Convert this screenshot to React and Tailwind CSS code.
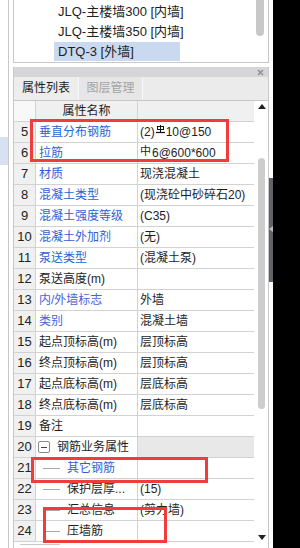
import React from "react";

const FONT = "font-['Liberation_Sans','Noto_Sans_CJK_SC',sans-serif]";
const BLUE = "text-[#2f5fd6]";

const rows = [
  { n: 5, name: "垂直分布钢筋", blue: true, value: "rebar5" },
  { n: 6, name: "拉筋", blue: true, value: "rebar6" },
  { n: 7, name: "材质", blue: true, value: "现浇混凝土" },
  { n: 8, name: "混凝土类型", blue: true, value: "(现浇砼中砂碎石20)" },
  { n: 9, name: "混凝土强度等级", blue: true, value: "(C35)" },
  { n: 10, name: "混凝土外加剂", blue: true, value: "(无)" },
  { n: 11, name: "泵送类型", blue: true, value: "(混凝土泵)" },
  { n: 12, name: "泵送高度(m)", value: "" },
  { n: 13, name: "内/外墙标志", blue: true, purple: true, value: "外墙" },
  { n: 14, name: "类别", blue: true, purple: true, value: "混凝土墙" },
  { n: 15, name: "起点顶标高(m)", value: "层顶标高" },
  { n: 16, name: "终点顶标高(m)", value: "层顶标高" },
  { n: 17, name: "起点底标高(m)", value: "层底标高" },
  { n: 18, name: "终点底标高(m)", value: "层底标高" },
  { n: 19, name: "备注", value: "" },
  { n: 20, name: "钢筋业务属性", group: true, value: "" },
  { n: 21, name: "其它钢筋", tree: true, blue: true, value: "" },
  { n: 22, name: "保护层厚...", tree: true, value: "(15)" },
  { n: 23, name: "汇总信息", tree: true, value: "(剪力墙)" },
  { n: 24, name: "压墙筋", tree: true, value: "" },
];

// 三级钢符号
const Grade3 = () => (
  <svg width="9" height="9" viewBox="0 0 9 9" className="relative -top-[3px] mx-[1px]">
    <rect x="1.5" y="1.5" width="6" height="3" fill="none" stroke="#111" strokeWidth="1" />
    <line x1="4.5" y1="0" x2="4.5" y2="7.5" stroke="#111" strokeWidth="1" />
    <line x1="0" y1="7.5" x2="9" y2="7.5" stroke="#111" strokeWidth="1.2" />
  </svg>
);

const Value = ({ v }) => {
  if (v === "rebar5")
    return (
      <span className="flex items-center">
        (2)
        <Grade3 />
        10@150
      </span>
    );
  if (v === "rebar6")
    return (
      <span className="flex items-center">
        <span className="relative -top-[2px] text-[11px] mr-[1px]">中</span>
        6@600*600
      </span>
    );
  return v;
};

const Row = ({ r }) => {
  const color = r.blue ? (r.purple ? "text-[#4a63e0]" : BLUE) : "text-[#1e1e1e]";
  return (
    <div className="flex h-[21px] border-b border-[#d2d2d2]">
      <div className="w-[22px] shrink-0 bg-[#f0f0f0] border-r border-[#d2d2d2] text-center text-[13px] leading-[20px] text-[#222]">
        {r.n}
      </div>
      <div className="w-[102px] shrink-0 border-r border-[#d2d2d2] flex items-center whitespace-nowrap overflow-hidden">
        {r.group && (
          <span className="ml-[2px] mr-[7px] w-[12px] h-[12px] border border-[#8a8a8a] rounded-[2px] flex items-center justify-center">
            <span className="w-[6px] h-[1px] bg-[#444]" />
          </span>
        )}
        {r.tree && (
          <>
            <span className="ml-[7px] w-[17px] h-[1px] bg-[#a8a8a8]" />
            <span className="w-[7px]" />
          </>
        )}
        <span className={`${color} ${r.group || r.tree ? "" : "pl-[3px]"} leading-[20px]`}>{r.name}</span>
      </div>
      <div
        className={`flex-1 pl-[2px] leading-[20px] whitespace-nowrap overflow-hidden text-[#1e1e1e] ${
          r.group ? "bg-[#e8e8e8]" : ""
        }`}
      >
        <Value v={r.value} />
      </div>
    </div>
  );
};

export default function App() {
  return (
    <div className={`relative w-[300px] h-[548px] flex bg-white overflow-hidden text-[12px] ${FONT}`}>
      {/* left gutter */}
      <div className="w-[8px] flex flex-col">
        <div className="h-[137px]" />
        <div className="h-[28px] bg-[#d6e2f1]" />
      </div>
      <div className="w-[5px] border-l border-[#c8c8c8]" />

      {/* main content */}
      <div className="w-[256px] flex flex-col">
        {/* component list */}
        <div className="h-[63px] border-l border-r border-b border-[#c8c8c8] flex">
          <div className="flex-1 pt-[2px] text-[13px] text-[#1e1e1e]">
            <div className="h-[20px] leading-[20px] ml-[40px] pl-[4px]">JLQ-主楼墙300 [内墙]</div>
            <div className="h-[20px] leading-[20px] ml-[40px] pl-[4px]">JLQ-主楼墙350 [内墙]</div>
            <div className="h-[19px] leading-[19px] ml-[40px] pl-[4px] w-[126px] bg-[#c9daf0]">DTQ-3 [外墙]</div>
          </div>
          <div className="w-[14px] pl-[2px]">
            <div className="w-[8px] h-[36px] bg-[#c8c8c8] rounded-b-full" />
          </div>
        </div>

        {/* property panel */}
        <div className="mt-[4px] flex-1 flex flex-col border-l border-r border-[#c8c8c8]">
          <div className="h-[10px] bg-[#d5d5da] flex items-center justify-end pr-[4px]">
            <svg width="7" height="7" viewBox="0 0 7 7">
              <path d="M1 1L6 6M6 1L1 6" stroke="#8c8c90" strokeWidth="1.4" />
            </svg>
          </div>
          <div className="h-[24px] flex bg-[#ebebeb] border-b border-[#c8c8c8]">
            <div className="w-[65px] border-r border-[#f8f8f8] text-center leading-[23px] text-[#1e1e1e] bg-[#ededed]">
              属性列表
            </div>
            <div className="w-[64px] border-r border-[#f8f8f8] text-center leading-[23px] text-[#a4a4a4] bg-[#e6e6e6]">
              图层管理
            </div>
          </div>

          <div className="flex-1 flex">
            <div className="w-[240px] flex flex-col">
              <div className="flex h-[21px] border-b border-[#d2d2d2] bg-[#f0f0f0]">
                <div className="w-[22px] shrink-0 bg-[#f8f8f8] border-r border-[#d2d2d2]" />
                <div className="w-[102px] shrink-0 border-r border-[#d2d2d2] text-center leading-[20px] text-[#1e1e1e]">
                  属性名称
                </div>
                <div className="flex-1" />
              </div>
              {rows.map((r) => (
                <Row key={r.n} r={r} />
              ))}
              <div className="flex-1 flex flex-col">
                <div className="h-[2px]" />
                <div className="h-[1px] bg-[#c8c8c8] ml-[6px] w-[40px]" />
              </div>
            </div>

            {/* vertical scrollbar */}
            <div className="w-[14px] flex flex-col items-center pt-[3px] pb-[8px]">
              <svg width="8" height="5" viewBox="0 0 8 5" className="ml-[1px]">
                <path d="M0 5L4 0L8 5Z" fill="#222" />
              </svg>
              <div className="mt-[49px] ml-[1px] w-[7px] h-[251px] bg-[#cdcdcd] rounded-full" />
              <div className="flex-1" />
              <svg width="8" height="5" viewBox="0 0 8 5" className="ml-[1px]">
                <path d="M0 0L8 0L4 5Z" fill="#222" />
              </svg>
            </div>
          </div>
        </div>
      </div>

      {/* splitter strip */}
      <div className="w-[4px] flex flex-col">
        <div className="h-[178px]" />
        <div className="h-[104px] bg-[#5f6369] flex items-center">
          <svg width="4" height="6" viewBox="0 0 4 6" className="relative -top-[1px]">
            <path d="M4 0L0 3L4 6Z" fill="#b8bcc0" />
          </svg>
        </div>
      </div>
      <div className="flex-1 bg-black" />

      {/* annotation boxes */}
      <div className="absolute left-[30px] top-[119px] w-[199px] h-[43px] border-[3px] border-[#f23b3b]" />
      <div className="absolute left-[31px] top-[457px] w-[177px] h-[26px] border-[3px] border-[#f23b3b]" />
      <div className="absolute left-[43px] top-[507px] w-[124px] h-[36px] border-[3px] border-[#f23b3b]" />
    </div>
  );
}
